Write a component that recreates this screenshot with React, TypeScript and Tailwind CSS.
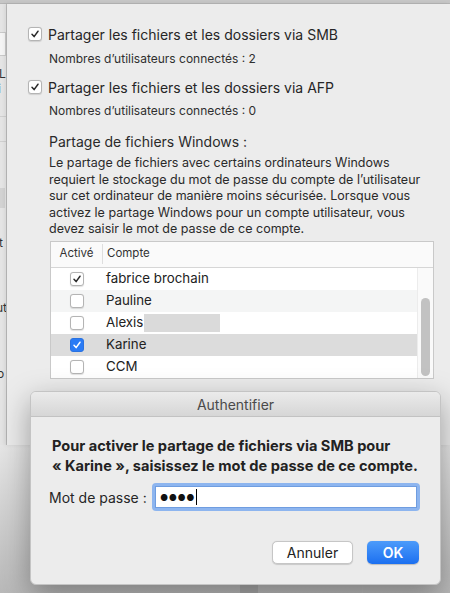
import React from "react";

const font = { fontFamily: "Inter, 'Noto Sans', sans-serif" };

function Check({ checked, blue }: { checked?: boolean; blue?: boolean }) {
  return (
    <div
      className={
        "w-[14px] h-[14px] rounded-[3px] flex items-center justify-center shrink-0 " +
        (blue
          ? "bg-[#2a7bf5] border border-[#2a72e0]"
          : "bg-white border border-[#b4b4b4] shadow-[0_0.5px_1px_rgba(0,0,0,0.12)]")
      }
    >
      {checked && (
        <svg width="10" height="10" viewBox="0 0 10 10">
          <path
            d="M2 5.3 L4.1 7.6 L8 2.2"
            fill="none"
            stroke={blue ? "#ffffff" : "#2b2b2b"}
            strokeWidth="1.5"
            strokeLinecap="round"
            strokeLinejoin="round"
          />
        </svg>
      )}
    </div>
  );
}

const rows = [
  { name: "fabrice brochain", checked: true, bg: "bg-white" },
  { name: "Pauline", checked: false, bg: "bg-[#f4f5f5]" },
  { name: "Alexis", checked: false, bg: "bg-white", blur: true },
  { name: "Karine", checked: true, blue: true, bg: "bg-[#dcdcdc]" },
  { name: "CCM", checked: false, bg: "bg-white" },
];

export default function App() {
  return (
    <div
      className="relative w-[450px] h-[593px] overflow-hidden bg-[#d9d9d9] text-[#262626]"
      style={font}
    >
      {/* top strip */}
      <div className="h-[4px] bg-[#c6c6c6] border-b border-[#b5b5b5]" />

      <div className="flex h-[441px]">
        {/* background window strip on the left */}
        <div className="w-[7px] bg-[#e4e4e4] border-r border-[#bdbdbd] flex flex-col overflow-hidden text-[12px] leading-[14px] text-[#333]">
          <div className="mt-[28px] h-[24px] w-[6px] bg-[#f4f4f4] border border-[#c8c8c8] border-l-0" />
          <div className="mt-[11px] -ml-[1px]">L</div>
          <div className="mt-[1px] -ml-[2px]">i</div>
          <div className="mt-[20px] h-px bg-[#cfcfcf]" />
          <div className="mt-[24px] h-px bg-[#cfcfcf]" />
          <div className="mt-[46px] h-[20px] w-[5px] bg-[#d2d2d2]" />
          <div className="mt-[28px] -ml-[1px]">t</div>
          <div className="mt-[51px] -ml-[4px]">ut</div>
          <div className="mt-[52px] -ml-[3px]">o</div>
        </div>

        {/* sheet */}
        <div className="flex-1 bg-[#ececec] pl-[21px] pt-[21px] shadow-[-2px_0_4px_rgba(0,0,0,0.08)]">
          <div className="flex items-center gap-[6px] h-[18px]">
            <Check checked />
            <span className="text-[14px]">Partager les fichiers et les dossiers via SMB</span>
          </div>
          <div className="mt-[8px] ml-[21px] h-[16px] leading-[16px] text-[12px] text-[#2f2f2f]">
            Nombres d’utilisateurs connectés : 2
          </div>
          <div className="mt-[11px] flex items-center gap-[6px] h-[18px]">
            <Check checked />
            <span className="text-[14px]">Partager les fichiers et les dossiers via AFP</span>
          </div>
          <div className="mt-[7px] ml-[21px] h-[16px] leading-[16px] text-[12px] text-[#2f2f2f]">
            Nombres d’utilisateurs connectés : 0
          </div>
          <div className="mt-[14px] ml-[21px] h-[18px] leading-[18px] text-[14px] text-[#2a2a2a]">
            Partage de fichiers Windows :
          </div>
          <p className="mt-[4px] ml-[21px] w-[380px] whitespace-nowrap text-[12.5px] leading-[16.5px] text-[#2a2a2a]">
            Le partage de fichiers avec certains ordinateurs Windows
            <br />
            requiert le stockage du mot de passe du compte de l’utilisateur
            <br />
            sur cet ordinateur de manière moins sécurisée. Lorsque vous
            <br />
            activez le partage Windows pour un compte utilisateur, vous
            <br />
            devez saisir le mot de passe de ce compte.
          </p>

          {/* table */}
          <div className="mt-[3px] ml-[22px] w-[384px] h-[138px] border border-[#c9c9c9] bg-white flex flex-col">
            <div className="h-[26px] flex items-center bg-[#fafafa] border-b border-[#d6d6d6] text-[11.5px] text-[#333]">
              <div className="w-[52px] h-[20px] flex items-center justify-center border-r border-[#dedede]">Activé</div>
              <div className="pl-[4px]">Compte</div>
            </div>
            <div className="flex flex-1">
              <div className="flex-1 flex flex-col">
                {rows.map((r) => (
                  <div key={r.name} className={"h-[22px] flex items-center " + r.bg}>
                    <div className="w-[52px] flex justify-center">
                      <Check checked={r.checked} blue={r.blue} />
                    </div>
                    <span className="pl-[3px] text-[13.3px] text-[#222]">{r.name}</span>
                    {r.blur && <div className="ml-[1px] w-[76px] h-[18px] bg-[#dadada]" />}
                  </div>
                ))}
              </div>
              <div className="w-[16px] bg-[#fafafa] border-l border-[#ececec] flex justify-center pt-[30px]">
                <div className="w-[9px] h-[78px] rounded-full bg-[#c2c2c2]" />
              </div>
            </div>
          </div>
        </div>
      </div>

      {/* bottom background */}
      <div className="h-[148px] bg-gradient-to-b from-[#e6e6e6] via-[#cfcfcf] to-[#b9b9b9] flex">
        <div className="w-[240px]" />
        <div className="w-[18px] bg-[#a9a9a9]" />
        <div className="w-[104px]" />
        <div className="w-px bg-[#bcbcbc]" />
      </div>

      {/* authentication dialog */}
      <div className="absolute left-[30px] top-[391px] w-[411px] h-[194px] rounded-[6px] bg-[#ececec] border border-[#c4c4c4] shadow-[0_10px_30px_rgba(0,0,0,0.35)] overflow-hidden flex flex-col">
        <div className="h-[25px] bg-gradient-to-b from-[#ebebeb] to-[#d6d6d6] border-b border-[#c2c2c2] flex items-center justify-center text-[14px] text-[#4a4a4a]">
          Authentifier
        </div>
        <div className="pl-[21px] pt-[19px] text-[14.6px] leading-[20px] font-bold text-[#222] whitespace-nowrap">
          <div>Pour activer le partage de fichiers via SMB pour</div>
          <div>« Karine », saisissez le mot de passe de ce compte.</div>
        </div>
        <div className="mt-[7px] pl-[18px] flex items-center">
          <span className="w-[103px] text-[14px] text-[#262626]">Mot de passe :</span>
          <div className="w-[268px] h-[28px] rounded-[4px] bg-[#8db5ef] p-[3px]">
            <div className="h-full bg-white border border-[#6f9de0] flex items-center pl-[4px]">
              <span className="text-[9px] tracking-[0.5px] text-[#111] leading-none">●●●●</span>
              <div className="ml-[1px] w-px h-[16px] bg-black" />
            </div>
          </div>
        </div>
        <div className="mt-[30px] pr-[21px] flex justify-end gap-[14px]">
          <button className="w-[81px] h-[23px] rounded-[5px] bg-white border border-[#c6c6c6] shadow-[0_0.5px_1px_rgba(0,0,0,0.15)] text-[14px] text-[#222]">
            Annuler
          </button>
          <button className="w-[52px] h-[23px] rounded-[5px] bg-gradient-to-b from-[#4c9bfa] to-[#1b6ff0] text-white text-[14px] font-semibold shadow-[0_0.5px_1px_rgba(0,0,0,0.2)]">
            OK
          </button>
        </div>
      </div>
    </div>
  );
}
